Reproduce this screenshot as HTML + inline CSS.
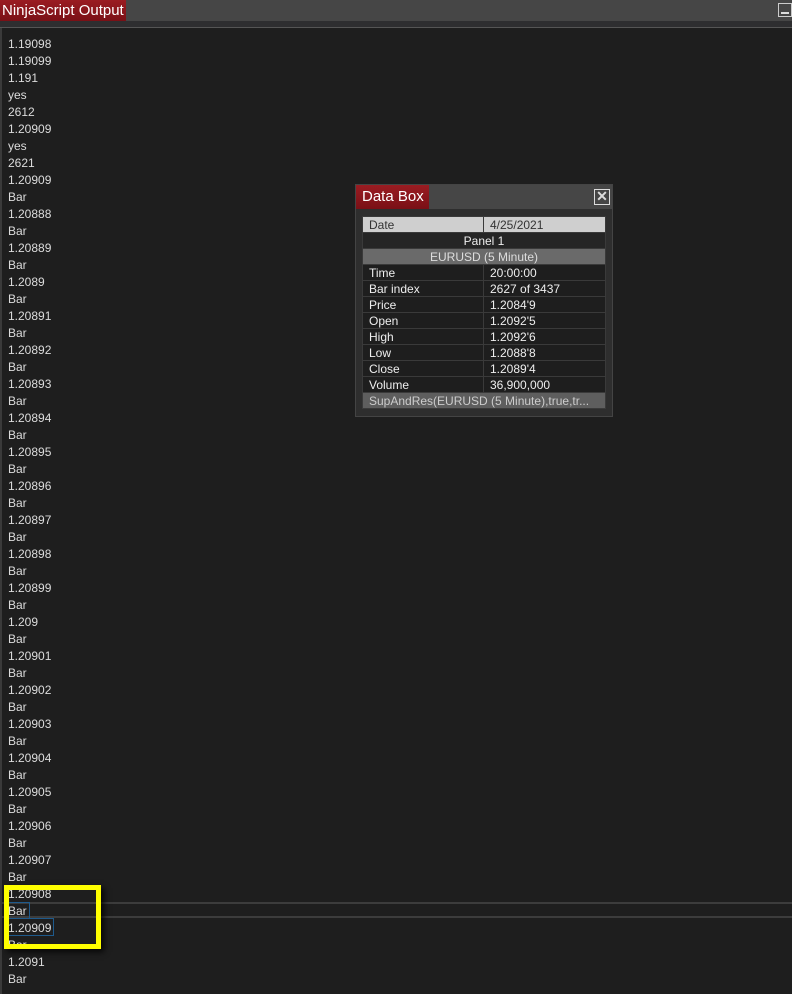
<!DOCTYPE html>
<html><head><style>
*{margin:0;padding:0;box-sizing:border-box}
body{width:792px;height:994px;background:#1e1e1e;font-family:"Liberation Sans",sans-serif;position:relative;overflow:hidden}
.top{position:absolute;left:0;top:0;width:792px;height:21px;background:#464646}
.tab{position:absolute;left:0;top:0;width:126px;height:21px;background:linear-gradient(#9a1c22,#7a1016);color:#fff;font-size:15px;line-height:21px;padding-left:2px}
.strip{position:absolute;left:0;top:21px;width:792px;height:7px;background:#2e2e30;border-bottom:1px solid #555}
.min{position:absolute;left:778px;top:3px;width:14px;height:14px;border:1px solid #ccc}
.min:after{content:"";position:absolute;left:2px;top:8px;width:8px;height:2px;background:#ddd}
.lb{position:absolute;left:0;top:28px;width:2px;height:966px;background:#3a3a3a}
.out{position:absolute;left:8px;top:36px;font-size:12px;line-height:17px;color:#dcdcdc}
.hl{position:absolute;left:0;width:792px;height:2px;background:#3c3c3c}
.yb{position:absolute;left:4px;top:885px;width:97px;height:64px;border:5px solid #ffff00;box-shadow:3px 3px 6px rgba(0,0,0,.8)}
.sel{position:absolute;border:1px solid #1e5a8c}
.db{position:absolute;left:355px;top:184px;width:258px;height:233px;background:#2e2e2e;border:1px solid #444}
.dbt{position:absolute;left:0;top:0;width:256px;height:24px;background:#464646}
.dbtab{position:absolute;left:0;top:0;width:73px;height:24px;background:linear-gradient(#9a1c22,#7a1016);color:#fff;font-size:15px;line-height:24px;padding-left:6px}
.x{position:absolute;left:238px;top:4px;width:16px;height:16px;border:1px solid #ddd;color:#ddd;font-size:14px;line-height:13px;text-align:center;font-weight:bold}
table{position:absolute;left:6px;top:31px;width:244px;border-collapse:collapse;font-size:12px}
td{height:16px;border:1px solid #3a3a3a;color:#eee;padding:0 6px;background:#1e1e1e;white-space:nowrap}
td.v{width:122px}
</style></head><body>
<div class="top"></div><div class="tab">NinjaScript Output</div><div class="min"></div>
<div class="strip"></div><div class="lb"></div>
<div class="out">1.19098<br>1.19099<br>1.191<br>yes<br>2612<br>1.20909<br>yes<br>2621<br>1.20909<br>Bar<br>1.20888<br>Bar<br>1.20889<br>Bar<br>1.2089<br>Bar<br>1.20891<br>Bar<br>1.20892<br>Bar<br>1.20893<br>Bar<br>1.20894<br>Bar<br>1.20895<br>Bar<br>1.20896<br>Bar<br>1.20897<br>Bar<br>1.20898<br>Bar<br>1.20899<br>Bar<br>1.209<br>Bar<br>1.20901<br>Bar<br>1.20902<br>Bar<br>1.20903<br>Bar<br>1.20904<br>Bar<br>1.20905<br>Bar<br>1.20906<br>Bar<br>1.20907<br>Bar<br>1.20908<br>Bar<br>1.20909<br>Bar<br>1.2091<br>Bar</div>
<div class="hl" style="top:902px"></div><div class="hl" style="top:916px"></div>
<div class="sel" style="left:8px;top:902px;width:22px;height:17px"></div>
<div class="sel" style="left:8px;top:918px;width:46px;height:18px"></div>
<div class="yb"></div>
<div class="db"><div class="dbt"></div><div class="dbtab">Data Box</div><div class="x">✕</div>
<table>
<tr><td style="background:#cfcfcf;color:#333">Date</td><td class="v" style="background:#cfcfcf;color:#333;border-left-color:#cfcfcf">4/25/2021</td></tr>
<tr><td colspan="2" style="text-align:center;background:#252525">Panel 1</td></tr>
<tr><td colspan="2" style="text-align:center;background:#6a6a6a;color:#ddd">EURUSD (5 Minute)</td></tr>
<tr><td>Time</td><td class="v">20:00:00</td></tr>
<tr><td>Bar index</td><td class="v">2627 of 3437</td></tr>
<tr><td>Price</td><td class="v">1.2084'9</td></tr>
<tr><td>Open</td><td class="v">1.2092'5</td></tr>
<tr><td>High</td><td class="v">1.2092'6</td></tr>
<tr><td>Low</td><td class="v">1.2088'8</td></tr>
<tr><td>Close</td><td class="v">1.2089'4</td></tr>
<tr><td>Volume</td><td class="v">36,900,000</td></tr>
<tr><td colspan="2" style="background:#5e5e5e;color:#ccc">SupAndRes(EURUSD (5 Minute),true,tr...</td></tr>
</table></div>
</body></html>
